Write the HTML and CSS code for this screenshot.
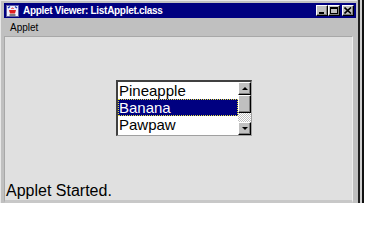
FILE: index.html
```html
<!DOCTYPE html>
<html>
<head>
<meta charset="utf-8">
<link rel="stylesheet" href="styles.css">
</head>
<body>
<div class="screen">
  <div class="window">
    <div class="titlebar">
      <svg class="appicon" width="13" height="12" viewBox="0 0 13 12">
        <rect x="0" y="0" width="13" height="12" fill="#f0f0ff"/>
        <rect x="0.5" y="0.5" width="12" height="11" fill="none" stroke="#6060a0"/>
        <path d="M2 3 L4 1.5 M9 1.5 L11 3" stroke="#2040c0" stroke-width="1.4"/>
        <path d="M3 5 L10 5 L9 8.5 L4 8.5 Z" fill="#e02020"/>
        <path d="M3.5 10 L9.5 10" stroke="#303030" stroke-width="1.2"/>
        <path d="M5.5 4 Q6.5 1.5 7.5 4" stroke="#e02020" fill="none"/>
      </svg>
      <span class="title">Applet Viewer: ListApplet.class</span>
      <div class="winbtns">
        <div class="wbtn"><span class="minglyph"></span></div>
        <div class="wbtn"><span class="maxglyph"></span></div>
        <div class="wbtn close">
          <svg width="8" height="7" viewBox="0 0 8 7"><path d="M0.5 0.5 L7 6.5 M7 0.5 L0.5 6.5" stroke="#000" stroke-width="1.6"/></svg>
        </div>
      </div>
    </div>
    <div class="menubar"><span class="menuitem">Applet</span></div>
    <div class="content">
      <div class="applet">
        <div class="listbox">
          <div class="items">
            <div class="item">Pineapple</div>
            <div class="item selected">Banana</div>
            <div class="item">Pawpaw</div>
          </div>
          <div class="scrollbar">
            <div class="sbtn"><span class="arrow up"></span></div>
            <div class="thumb"></div>
            <div class="track"></div>
            <div class="sbtn"><span class="arrow down"></span></div>
          </div>
        </div>
      </div>
      <div class="status">Applet Started.</div>
    </div>
  </div>
  <div class="edge">
    <div class="gap1"></div>
    <div class="line1"></div>
    <div class="gap2"></div>
    <div class="line2"></div>
  </div>
</div>
</body>
</html>
```
FILE: styles.css
```css
html, body {
  margin: 0;
  padding: 0;
  background: #ffffff;
}
.screen {
  display: flex;
  width: 366px;
  height: 203px;
  overflow: hidden;
}
.window {
  width: 357px;
  box-sizing: border-box;
  background: #c0c0c0;
  border-top: 1px solid #e8e8e8;
  border-left: 1px solid #e8e8e8;
  padding: 2px 1px 0 3px;
  display: flex;
  flex-direction: column;
  font-family: "Liberation Sans", Arial, sans-serif;
}
.titlebar {
  height: 15px;
  background: #000080;
  display: flex;
  align-items: center;
  padding-left: 2px;
  flex-shrink: 0;
}
.appicon {
  display: block;
  margin-right: 4px;
}
.title {
  color: #ffffff;
  font-weight: bold;
  font-size: 10px;
  letter-spacing: -0.3px;
  white-space: nowrap;
}
.winbtns {
  margin-left: auto;
  display: flex;
  margin-right: 2px;
}
.wbtn {
  width: 12px;
  height: 11px;
  box-sizing: border-box;
  background: #c0c0c0;
  border-top: 1px solid #ffffff;
  border-left: 1px solid #ffffff;
  border-right: 1px solid #000000;
  border-bottom: 1px solid #000000;
  box-shadow: inset -1px -1px 0 #808080;
  display: flex;
  align-items: center;
  justify-content: center;
}
.wbtn.close {
  margin-left: 2px;
}
.minglyph {
  width: 5px;
  height: 2px;
  background: #000;
  margin-top: 4px;
  margin-right: 1px;
}
.maxglyph {
  width: 8px;
  height: 7px;
  box-sizing: border-box;
  border: 1px solid #000;
  border-top-width: 2px;
}
.menubar {
  height: 17px;
  display: flex;
  align-items: center;
  flex-shrink: 0;
}
.menuitem {
  font-size: 10px;
  color: #000;
  margin-left: 6px;
  margin-top: 2px;
}
.content {
  flex: 1;
  background: #e0e0e0;
  border-top: 1px solid #a8a8a8;
  border-left: 1px solid #a8a8a8;
  border-right: 1px solid #f0f0f0;
  border-bottom: 3px solid #c8c8c8;
  margin-right: 3px;
  margin-top: 1px;
  display: flex;
  flex-direction: column;
}
.applet {
  flex: 1;
  padding-top: 43px;
  padding-left: 111px;
}
.listbox {
  width: 136px;
  height: 56px;
  box-sizing: border-box;
  background: #ffffff;
  border-top: 2px solid #404040;
  border-left: 2px solid #404040;
  border-right: 1px solid #a0a0a0;
  border-bottom: 1px solid #a0a0a0;
  display: flex;
}
.items {
  flex: 1;
}
.item {
  height: 17px;
  line-height: 17px;
  font-size: 15px;
  color: #000;
  padding-left: 1px;
  box-sizing: border-box;
}
.item.selected {
  background: #000080;
  color: #ffffff;
  outline: 1px dotted #e0e040;
  outline-offset: -1px;
}
.scrollbar {
  width: 13px;
  display: flex;
  flex-direction: column;
  background: #c0c0c0;
}
.sbtn {
  height: 13px;
  box-sizing: border-box;
  background: #c0c0c0;
  border-top: 1px solid #ffffff;
  border-left: 1px solid #ffffff;
  border-right: 1px solid #000;
  border-bottom: 1px solid #000;
  box-shadow: inset -1px -1px 0 #808080;
  display: flex;
  align-items: center;
  justify-content: center;
}
.thumb {
  height: 18px;
  box-sizing: border-box;
  background: #c0c0c0;
  border-top: 1px solid #ffffff;
  border-left: 1px solid #ffffff;
  border-right: 1px solid #000;
  border-bottom: 1px solid #000;
  box-shadow: inset -1px -1px 0 #808080;
}
.track {
  flex: 1;
  background-color: #e0e0e0;
  background-image: repeating-conic-gradient(#c0c0c0 0 25%, #ffffff 0 50%);
  background-size: 2px 2px;
}
.arrow {
  width: 0;
  height: 0;
  border-left: 3px solid transparent;
  border-right: 3px solid transparent;
}
.arrow.up {
  border-bottom: 3px solid #000;
}
.arrow.down {
  border-top: 3px solid #000;
}
.status {
  height: 18px;
  font-size: 16px;
  line-height: 18px;
  padding-left: 1px;
  color: #000;
}
.edge {
  flex: 1;
  display: flex;
}
.gap1 {
  width: 1px;
  background: #c0c0c0;
}
.line1 {
  width: 2px;
  background: #202020;
}
.gap2 {
  width: 2px;
  background: #d0d0d0;
}
.line2 {
  width: 2px;
  background: #101010;
}
```
